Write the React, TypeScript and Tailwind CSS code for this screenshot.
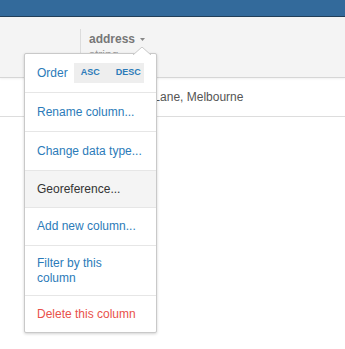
import React from 'react';

const items = [
  { label: 'Rename column...', tone: 'link', h: 'h-[39px]' },
  { label: 'Change data type...', tone: 'link', h: 'h-[39px]' },
  { label: 'Georeference...', tone: 'active', h: 'h-[37px]' },
  { label: 'Add new column...', tone: 'link', h: 'h-[38px]' },
  { label: 'Filter by this column', tone: 'link', h: 'h-[50px]' },
  { label: 'Delete this column', tone: 'danger', h: 'h-[36px]' },
];

const toneClass: Record<string, string> = {
  link: 'text-[#2b7bb9]',
  active: 'text-[#333333] bg-[#f4f4f4]',
  danger: 'text-[#e9514a]',
};

const ColumnMenu: React.FC = () => (
  <div className="absolute left-[24px] top-[53px] w-[133px] bg-white border border-[#c9c9c9] rounded-[2px] shadow-[0_1px_3px_rgba(0,0,0,0.18)]">
    <svg className="absolute left-[108px] top-[-7px]" width="18" height="8" viewBox="0 0 18 8">
      <path d="M0 8 L9 0 L18 8" fill="white" stroke="#c9c9c9" strokeWidth="1" />
    </svg>
    <div className="flex items-center h-[39px] px-[12px] border-b border-[#e6e6e6]">
      <span className="text-[12px] text-[#2b7bb9]">Order</span>
      <div className="ml-[6px] flex items-center gap-[16px] h-[20px] w-[75px] pl-[7px] bg-[#eeeeee] text-[9px] font-bold text-[#2b7bb9]">
        <span>ASC</span>
        <span>DESC</span>
      </div>
    </div>
    {items.map((it, i) => (
      <div
        key={it.label}
        className={`flex items-center pl-[12px] text-[12px] leading-[15px] ${it.h} ${
          i < items.length - 1 ? 'border-b border-[#e6e6e6]' : ''
        } ${toneClass[it.tone]}`}
      >
        <div className="w-[106px]">{it.label}</div>
      </div>
    ))}
  </div>
);

export default function App() {
  return (
    <div className="relative w-[345px] h-[349px] overflow-hidden bg-white font-['Liberation_Sans',Arial,sans-serif]">
      <div className="h-[17px] bg-[#336a9b] border-b border-[#22405a]" />
      <div className="flex h-[61px] bg-[#f4f4f4] border-b border-[#d6d6d6] shadow-[0_1px_2px_rgba(0,0,0,0.06)]">
        <div className="w-[80px]" />
        <div className="mt-[12px] flex-1 border-l border-[#dcdcdc] pl-[8px] pt-[3px]">
          <div className="flex items-center gap-[5px] h-[14px]">
            <span className="text-[12px] leading-[14px] font-bold text-[#777777]">address</span>
            <svg width="5" height="3" viewBox="0 0 5 3">
              <path d="M0 0 L5 0 L2.5 3 Z" fill="#888888" />
            </svg>
          </div>
          <div className="text-[12px] text-[#999999] leading-[14px] mt-[2px]">string</div>
        </div>
      </div>
      <div className="flex h-[39px] border-b border-[#dddddd] items-center">
        <div className="w-[80px]" />
        <div className="pl-[4px] text-[12px] text-[#555555]">101 Flinders Lane, Melbourne</div>
      </div>
      <ColumnMenu />
    </div>
  );
}
